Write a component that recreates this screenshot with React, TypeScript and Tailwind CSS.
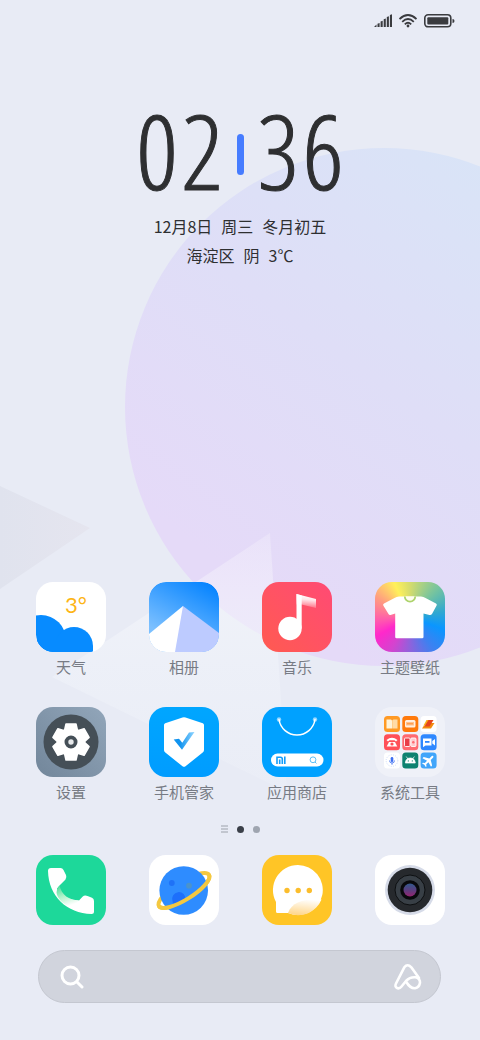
import type { ReactNode } from "react";

const tile = "block h-[70px] w-[70px] rounded-[17px]";

const Weather = () => (
  <svg viewBox="0 0 70 70" className={`${tile} bg-white`} aria-hidden="true">
    <defs>
      <clipPath id="weather-clip">
        <rect width="70" height="70" rx="17" />
      </clipPath>
    </defs>
    <g clipPath="url(#weather-clip)" fill="#078bff">
      <circle cx="5" cy="58" r="25" />
      <circle cx="38" cy="64" r="19" />
      <rect x="0" y="58" width="38" height="12" />
      <rect x="38" y="64" width="19" height="6" />
    </g>
    <text x="29" y="31" fill="#fdb515" className="font-['Lato','Noto_Sans_CJK_SC',sans-serif] text-[22px]">
      3°
    </text>
  </svg>
);

const Gallery = () => (
  <svg viewBox="0 0 70 70" className={tile} aria-hidden="true">
    <defs>
      <linearGradient id="sky" x1="0.75" y1="0" x2="0.3" y2="0.8">
        <stop offset="0" stopColor="#0a86ff" />
        <stop offset="1" stopColor="#7cc0ff" />
      </linearGradient>
      <clipPath id="gallery-clip">
        <rect width="70" height="70" rx="17" />
      </clipPath>
    </defs>
    <g clipPath="url(#gallery-clip)">
      <rect width="70" height="70" fill="url(#sky)" />
      <path d="M0 52 34 24 36 40 28 70H0Z" fill="#fff" />
      <path d="M34 24 70 51V70H26Z" fill="#bdcbff" />
    </g>
  </svg>
);

const Music = () => (
  <svg viewBox="0 0 70 70" className={`${tile} bg-linear-to-bl from-[#ff4a74] to-[#ff5a50]`} aria-hidden="true">
    <defs>
      <linearGradient id="flag" x1="0.6" y1="0.1" x2="0.5" y2="1">
        <stop offset="0" stopColor="#fff" />
        <stop offset="0.35" stopColor="#fff" stopOpacity="0.85" />
        <stop offset="1" stopColor="#fff" stopOpacity="0.15" />
      </linearGradient>
    </defs>
    <path d="M34.5 12 54 17V26L39.500 22.500H34.500Z" fill="url(#flag)" />
    <path d="M34.500 12 39.700 13.500V46.500H34.500Z" fill="#fff" />
    <circle cx="28" cy="46.500" r="11.700" fill="#fff" />
  </svg>
);

const Themes = () => (
  <svg
    viewBox="0 0 70 70"
    className={`${tile} bg-[conic-gradient(from_0deg,#d5dc6c,#74c3a0_45deg,#30a8d0_80deg,#0a96ff_110deg,#3f80f0_145deg,#8f62dc_180deg,#d344cf_210deg,#ff28cb_240deg,#ff5cac_265deg,#ff9c80_300deg,#fff05a_335deg,#d5dc6c_360deg)]`}
    aria-hidden="true"
  >
    <path
      d="M24 14.500H46Q48.500 14.800 50.500 16L61 21.500Q62.300 22.300 61.600 23.500L57 32Q56 33.400 54.500 33L48.500 31.500V55Q48.500 56.300 47.200 56.300H21.500Q20.200 56.300 20.200 55V31.500L15.500 33Q14.200 33.300 13.500 32L8.300 23.500Q7.600 22.300 9 21.500L19.500 16Q21.500 14.800 24 14.500Z"
      fill="#fff"
    />
    <path d="M29.800 14.500A5.200 5.200 0 0 0 40.200 14.500" fill="#fffdf0" stroke="#add36c" strokeWidth="1.800" />
  </svg>
);

const Settings = () => (
  <svg viewBox="0 0 70 70" className={`${tile} bg-linear-to-tr from-[#72869a] to-[#92a6ba]`} aria-hidden="true">
    <circle cx="35" cy="35" r="27.500" fill="#454f57" />
    <g fill="#fff" stroke="#fff" strokeWidth="1.500" strokeLinejoin="round">
      <circle cx="35" cy="35" r="13.500" />
      {[0, 60, 120, 180, 240, 300].map((angle) => (
        <path key={angle} d="M30 17H40L41.500 23.500H28.500Z" transform={`rotate(${angle} 35 35)`} />
      ))}
    </g>
    <circle cx="35" cy="35" r="4.600" fill="#e7e9eb" stroke="#454f57" strokeWidth="3.800" />
  </svg>
);

const Security = () => (
  <svg viewBox="0 0 70 70" className={`${tile} bg-linear-to-b from-[#00a6ff] to-[#009cff]`} aria-hidden="true">
    <defs>
      <linearGradient id="tick" x1="0" y1="0" x2="1" y2="0">
        <stop offset="0.3" stopColor="#1093ef" />
        <stop offset="1" stopColor="#8fd4ff" />
      </linearGradient>
    </defs>
    <path
      d="M33.500 10.500Q35 9.900 36.500 10.500L53.800 16.300Q55 16.800 55 18V43Q55 44.300 54 45.200L36.500 59.300Q35 60.400 33.500 59.300L16 45.200Q15 44.300 15 43V18Q15 16.800 16.200 16.300Z"
      fill="#fff"
    />
    <path d="M24.700 32.500 30 31.800 33.300 35.800 40 25.500 45.500 25 33 42.700Z" fill="url(#tick)" />
  </svg>
);

const Store = () => (
  <svg viewBox="0 0 70 70" className={`${tile} bg-[#00a1ff]`} aria-hidden="true">
    <circle cx="17" cy="12.500" r="2.200" fill="#8fd5ff" />
    <circle cx="53" cy="12.500" r="2.200" fill="#8fd5ff" />
    <path d="M17 12.500A18.200 18.200 0 0 0 53 12.500" fill="none" stroke="#fff" strokeWidth="1.500" strokeLinecap="round" />
    <rect x="9" y="46.500" width="52.500" height="13" rx="6.500" fill="#fff" />
    <path d="M15 57V50.200H18.500Q20.300 50.200 20.300 52V57M17.700 52.500V57M22.800 49.500V57" fill="none" stroke="#119dfb" strokeWidth="1.600" />
    <circle cx="51" cy="52.800" r="2.900" fill="none" stroke="#4cb8f5" strokeWidth="0.900" />
    <path d="m53 55 1.500 1.500" stroke="#4cb8f5" strokeWidth="0.900" />
  </svg>
);

const Tools = () => (
  <svg viewBox="0 0 70 70" className={`${tile} bg-white/30`} aria-hidden="true">
    <g>
      <rect x="9" y="9" width="16" height="16" rx="3.500" fill="#ff9a24" />
      <path d="M11.500 12.500H16L17 13.500V21.500H11.500Z" fill="#fff3d8" />
      <path d="M17.200 13.500 18.500 12.500H22.500V21.500H17.200Z" fill="#ffdca6" />
    </g>
    <g>
      <rect x="27.300" y="9" width="16" height="16" rx="3.500" fill="#ff7a0c" />
      <rect x="30" y="13" width="10.500" height="7.500" rx="1.500" fill="#fff0e2" />
      <path d="M32 15V18.500M34 15V18.500M36 15V18.500M38 15V18.500M32 16.800H38" stroke="#ff8a2c" strokeWidth="0.900" />
    </g>
    <g>
      <rect x="45.600" y="9" width="16" height="16" rx="3.500" fill="#fff" />
      <path d="M51.500 13H56.500L52.500 18.500H48.500Z" fill="#f9ae19" />
      <path d="M53.500 16H59.500L56 21.500H47L49 18.500H52Z" fill="#f28a0e" />
      <path d="M53.500 13H58.500L54.500 19.500H49.500Z" fill="#e6441e" />
    </g>
    <g>
      <rect x="9" y="27.300" width="16" height="16" rx="3.500" fill="#ff5058" />
      <path d="M11.500 33Q17 28.700 22.500 33L21 34.500 19.500 33.200H14.500L13 34.500Z" fill="#fff" />
      <path d="M14 35H20L22.300 39.500H11.700Z" fill="#fff" />
      <circle cx="17" cy="37" r="1.600" fill="#ff5058" />
    </g>
    <g>
      <rect x="27.300" y="27.300" width="16" height="16" rx="3.500" fill="#ff6a70" />
      <rect x="29.500" y="31" width="5.500" height="8.500" rx="1" fill="#e83e48" stroke="#fff" strokeWidth="0.900" />
      <rect x="35.800" y="31" width="5.200" height="8.500" rx="1" fill="#ffc9cc" stroke="#fff" strokeWidth="0.900" />
      <circle cx="38.300" cy="35.200" r="1.200" fill="#ff6a70" />
    </g>
    <g>
      <rect x="45.600" y="27.300" width="16" height="16" rx="3.500" fill="#2f88ff" />
      <path d="M48 31.500H56.500V38.500H50.500L48 40.200ZM57.300 34 60 32V38.500L57.300 36.500Z" fill="#fff" />
      <rect x="50" y="34" width="4.500" height="1.800" fill="#2f88ff" />
    </g>
    <g>
      <rect x="9" y="45.600" width="16" height="16" rx="3.500" fill="#fff" />
      <circle cx="17" cy="53.600" r="5.800" fill="none" stroke="#b9cdf5" strokeWidth="0.700" strokeDasharray="1 1.300" />
      <rect x="15.700" y="50" width="2.600" height="5" rx="1.300" fill="#3d6ff2" />
      <path d="M14.500 53.500Q14.500 56 17 56T19.500 53.500M17 56V57.800" fill="none" stroke="#3d6ff2" strokeWidth="0.800" />
    </g>
    <g>
      <rect x="27.300" y="45.600" width="16" height="16" rx="3.500" fill="#0d8270" />
      <path d="M30.300 56Q30.800 51 35.300 51T40.300 56ZM31.200 49.500 33 52M39.400 49.500 37.600 52" fill="#fff" stroke="#fff" strokeWidth="0.700" />
      <circle cx="33.300" cy="53.900" r="0.600" fill="#0d8270" />
      <circle cx="37.300" cy="53.900" r="0.600" fill="#0d8270" />
    </g>
    <g>
      <rect x="45.600" y="45.600" width="16" height="16" rx="3.500" fill="#41a5fa" />
      <path
        transform="translate(53.600 53.600) rotate(45)"
        d="M-1 -5.500Q0 -7.500 1 -5.500V-2L6 1V2.600L1 1.200V4.300L2.600 5.600V6.600L0 6 -2.600 6.600V5.600L-1 4.300V1.200L-6 2.600V1L-1 -2Z"
        fill="#fff"
      />
    </g>
  </svg>
);

const Phone = () => (
  <svg viewBox="0 0 70 70" className={`${tile} bg-[#1dd89a]`} aria-hidden="true">
    <defs>
      <linearGradient id="handset" x1="0.2" y1="0" x2="0.600" y2="1">
        <stop offset="0" stopColor="#4fdd9c" />
        <stop offset="0.500" stopColor="#b2f3cb" />
        <stop offset="1" stopColor="#fff" />
      </linearGradient>
    </defs>
    <path
      d="M15 13H24.500Q26.500 13 27.500 15L30 20Q31 22.500 29.500 24.500L23.500 30.500 21 33.500C24 41 32 45 43 45.500L46.500 41.800Q48.500 39.800 51.500 41L56 42.700Q58 43.700 58 46V56.500Q58 59 55.500 59C31 58.500 12.500 41 12 16Q12 13 15 13Z"
      fill="#fff"
    />
    <path d="M23.500 30.500C25.500 40 33 45 43 45.500Q38 51 31 50.500C25 47.500 21 42 20.500 37.500Q20.300 34 23.500 30.500Z" fill="url(#handset)" />
  </svg>
);

const Browser = () => (
  <svg viewBox="0 0 70 70" className={`${tile} bg-white`} aria-hidden="true">
    <ellipse cx="35" cy="35.500" rx="29.500" ry="9" transform="rotate(-32 35 35.500)" fill="none" stroke="#f4c840" strokeWidth="4" />
    <circle cx="34.700" cy="35.500" r="24.300" fill="#2e8cff" />
    <circle cx="22.800" cy="28" r="2.900" fill="#1f72f7" />
    <circle cx="40" cy="30.700" r="2.900" fill="#4b93cb" />
    <path d="M23.500 46A6.700 6.700 0 1 1 36.500 44.500Q31 48 24 48.500Z" fill="#1d6ffb" />
    <path d="M5.500 35.500A29.500 9 0 0 0 64.500 35.500" transform="rotate(-32 35 35.500)" fill="none" stroke="#f4c840" strokeWidth="4" />
  </svg>
);

const Messages = () => (
  <svg viewBox="0 0 70 70" className={`${tile} bg-[#ffc526]`} aria-hidden="true">
    <defs>
      <linearGradient id="fold" x1="0.600" y1="0" x2="0.400" y2="1">
        <stop offset="0" stopColor="#fff" />
        <stop offset="1" stopColor="#ffd68a" />
      </linearGradient>
    </defs>
    <path d="M36 10A25 25 0 1 1 26 58H15.500Q14 58 14 56.500V47A25 25 0 0 1 36 10Z" fill="#fff" />
    <path d="M26 58C30 47 42 43.500 59.500 44.500A25 25 0 0 1 26 58Z" fill="url(#fold)" />
    <g fill="#fbbd2c">
      <circle cx="25" cy="35.500" r="2.700" />
      <circle cx="36.200" cy="35.500" r="2.700" />
      <circle cx="47.300" cy="35.500" r="2.700" />
    </g>
  </svg>
);

const Camera = () => (
  <svg viewBox="0 0 70 70" className={`${tile} bg-white`} aria-hidden="true">
    <defs>
      <linearGradient id="lens" x1="0" y1="0" x2="0" y2="1">
        <stop offset="0" stopColor="#33588c" />
        <stop offset="0.500" stopColor="#5a3f80" />
        <stop offset="1" stopColor="#93246f" />
      </linearGradient>
    </defs>
    <circle cx="35" cy="35" r="25" fill="#d6dbe8" />
    <circle cx="35" cy="35" r="22.300" fill="#26292d" />
    <circle cx="35" cy="35" r="15" fill="#383f46" stroke="#0d0f11" strokeWidth="1" />
    <circle cx="35" cy="35" r="9.800" fill="#08090c" />
    <circle cx="35" cy="35" r="6.500" fill="url(#lens)" />
  </svg>
);

const apps = [
  { label: "天气", icon: Weather },
  { label: "相册", icon: Gallery },
  { label: "音乐", icon: Music },
  { label: "主题壁纸", icon: Themes },
  { label: "设置", icon: Settings },
  { label: "手机管家", icon: Security },
  { label: "应用商店", icon: Store },
  { label: "系统工具", icon: Tools },
];

const dock = [
  { label: "电话", icon: Phone },
  { label: "浏览器", icon: Browser },
  { label: "短信", icon: Messages },
  { label: "相机", icon: Camera },
];

const Wallpaper = () => (
  <svg
    viewBox="0 0 480 1040"
    preserveAspectRatio="xMidYMid slice"
    className="absolute inset-0 -z-10 h-full w-full"
    aria-hidden="true"
  >
    <defs>
      <linearGradient id="moon" x1="0.800" y1="0.100" x2="0.250" y2="0.850">
        <stop offset="0" stopColor="#d9e4f7" />
        <stop offset="0.500" stopColor="#dfdef7" />
        <stop offset="1" stopColor="#e5daf8" />
      </linearGradient>
      <linearGradient id="left-peak" x1="0" y1="0" x2="1" y2="0">
        <stop offset="0" stopColor="#e0e3ee" />
        <stop offset="1" stopColor="#e5e5ef" />
      </linearGradient>
      <linearGradient id="front-peak" x1="0" y1="0" x2="0" y2="1">
        <stop offset="0" stopColor="#fff" stopOpacity="0.200" />
        <stop offset="0.500" stopColor="#eff2f9" stopOpacity="0.700" />
        <stop offset="1" stopColor="#edf0f8" stopOpacity="0.400" />
      </linearGradient>
    </defs>
    <rect width="480" height="1040" fill="#e8ebf5" />
    <circle cx="384" cy="407" r="259" fill="url(#moon)" />
    <path d="M0 486 90 528 0 589Z" fill="url(#left-peak)" />
    <path d="M270 533 52 677 287 792Z" fill="url(#front-peak)" />
  </svg>
);

const StatusBar = () => (
  <header className="flex items-center justify-end gap-[7px] pt-[14px] pr-[25px]">
    <svg viewBox="0 0 18 14" className="h-[14px] w-[18px]" fill="#3a3b3f" role="img" aria-label="信号">
      <path d="M0 13 2.500 10.500V13ZM3.500 9.800 5.600 9V13H3.500ZM6.600 7.500 8.700 6.800V13H6.600ZM9.700 5.200 11.800 4.500V13H9.700ZM12.800 3 14.900 2.300V13H12.800ZM15.900 1 18 0.300V13H15.900Z" />
    </svg>
    <svg viewBox="0 0 18 14" className="h-[14px] w-[18px]" fill="none" stroke="#3a3b3f" strokeWidth="1.800" role="img" aria-label="无线网络">
      <path d="M0.500 5Q9 -3 17.500 5M3.200 7.800Q9 2.300 14.800 7.800M5.800 10.300Q9 7.300 12.200 10.300" />
      <circle cx="9" cy="12" r="1.400" fill="#3a3b3f" stroke="none" />
    </svg>
    <svg viewBox="0 0 31 14" className="h-[14px] w-[31px]" role="img" aria-label="电量">
      <rect x="0.800" y="0.800" width="26" height="12" rx="3.300" fill="none" stroke="#3a3b3f" strokeWidth="1.600" />
      <rect x="3.300" y="3.200" width="21" height="7.200" rx="1" fill="#3a3b3f" />
      <path d="M28.500 5Q30.500 5 30.500 7T28.500 9Z" fill="#3a3b3f" />
    </svg>
  </header>
);

const Digit = ({ children }: { children: ReactNode }) => (
  <span className="w-[45px] pb-2 text-center">{children}</span>
);

const Clock = () => (
  <section className="mt-[86px] flex flex-col items-center text-[#2e2f31]">
    <time
      dateTime="02:36"
      className="flex h-20 items-center font-['Open_Sans_Condensed_Light','Roboto_Condensed',sans-serif] text-[104px] leading-[80px] font-light [-webkit-text-stroke:1px_#2e2f31]"
    >
      <Digit>0</Digit>
      <Digit>2</Digit>
      <span className="mx-3 h-[41px] w-[7px] rounded-full bg-[#467cff]" />
      <Digit>3</Digit>
      <Digit>6</Digit>
    </time>
    <p className="mt-[18px] flex gap-[9px] text-[16px] leading-[29px]">
      <span>12月8日</span>
      <span>周三</span>
      <span>冬月初五</span>
    </p>
    <p className="flex gap-[9px] text-[16px] leading-[29px]">
      <span>海淀区</span>
      <span>阴</span>
      <span>3℃</span>
    </p>
  </section>
);

export default function App() {
  return (
    <main className="relative isolate flex min-h-screen flex-col overflow-hidden font-['Noto_Sans_CJK_SC',sans-serif]">
      <Wallpaper />
      <StatusBar />
      <Clock />

      <div className="mt-auto pt-10 pr-[35px] pb-[37px] pl-9">
        <nav className="grid grid-cols-[repeat(4,70px)] justify-between gap-y-[30px]">
          {apps.map(({ label, icon: Icon }) => (
            <button key={label} type="button" className="flex flex-col items-center gap-[5px]">
              <Icon />
              <span className="text-[15px] leading-5 whitespace-nowrap text-[#777b84]">{label}</span>
            </button>
          ))}
        </nav>

        <div className="mt-[23px] flex items-center justify-center gap-[9px]">
          <svg viewBox="0 0 7 8" className="h-2 w-[7px]" aria-hidden="true">
            <path d="M0 1H7M0 4H7M0 7H7" stroke="#9ca1aa" strokeWidth="1" />
          </svg>
          <span className="h-[7px] w-[7px] rounded-full bg-[#3a3f48]" />
          <span className="h-[7px] w-[7px] rounded-full bg-[#9fa5b0]" />
        </div>

        <nav className="mt-[22px] grid grid-cols-[repeat(4,70px)] justify-between">
          {dock.map(({ label, icon: Icon }) => (
            <button key={label} type="button" aria-label={label}>
              <Icon />
            </button>
          ))}
        </nav>

        <form
          role="search"
          className="mt-[25px] mr-1 ml-0.5 flex h-[53px] items-center rounded-full border border-[#c4c7d0] bg-[#d1d4dd] pr-[18px] pl-[21px]"
        >
          <button type="submit" aria-label="搜索">
            <svg viewBox="0 0 24 24" className="h-6 w-6" fill="none" stroke="#fff" strokeWidth="3" strokeLinecap="round" aria-hidden="true">
              <circle cx="10.500" cy="10.500" r="8.500" />
              <path d="m17 17 5 5" />
            </svg>
          </button>
          <input type="search" aria-label="搜索内容" className="min-w-0 flex-1 bg-transparent px-3 text-[16px] outline-none" />
          <button type="button" aria-label="语音助手">
            <svg viewBox="0 0 29 28" className="h-7 w-[29px]" fill="none" stroke="#fff" strokeWidth="2.600" strokeLinecap="round" strokeLinejoin="round" aria-hidden="true">
              <path d="M26 15 18.300 4.300Q14.500 0.300 11.300 4.300L3 20.500Q1.300 24 4.500 25.300 6.800 25.800 8.300 23.800L13 18Q17 13.800 22.500 14.300 27.200 15.500 27 19.800 26.200 24.500 22 25.300C18 25.500 15 22 13 18.500" />
            </svg>
          </button>
        </form>
      </div>
    </main>
  );
}
